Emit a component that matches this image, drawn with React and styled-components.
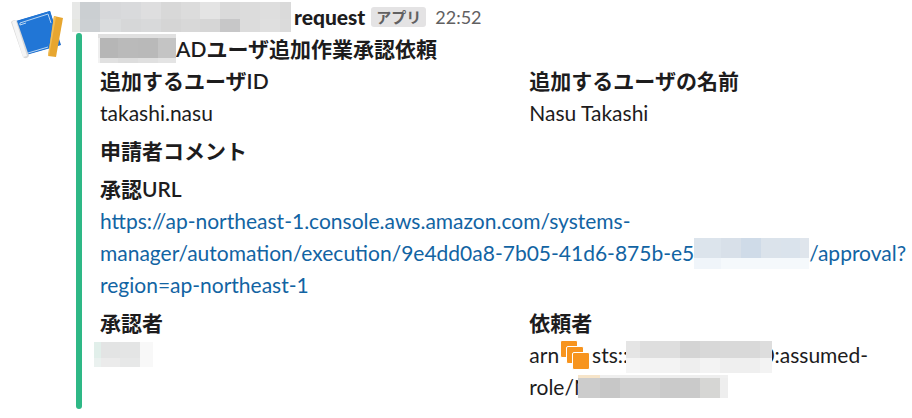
import React from "react";
import styled, { createGlobalStyle } from "styled-components";

const GlobalStyle = createGlobalStyle`
  * { box-sizing: border-box; }
  body {
    margin: 0;
    background: #fff;
    color: #1d1c1d;
    font-family: Lato, "Noto Sans CJK JP", sans-serif;
    font-size: 21px;
    line-height: 32px;
    overflow-x: hidden;
  }
`;

const Message = styled.article`
  display: grid;
  grid-template-columns: 76px minmax(0, 1fr);
`;

const Avatar = styled.div`
  padding: 8px 0 0 8px;
  svg { display: block; }
`;

const Header = styled.header`
  display: flex;
  align-items: center;
  height: 33px;
`;

const Sender = styled.span`
  display: flex;
  align-items: center;
  gap: 3px;
  margin-left: -4px;
  font-weight: 900;
`;

const AppBadge = styled.span`
  margin-left: 6px;
  padding: 0 5px;
  border-radius: 3px;
  background: #e4e3e4;
  color: #616061;
  font-size: 15px;
  font-weight: 700;
  line-height: 20px;
`;

const Time = styled.time`
  margin-left: 9px;
  color: #616061;
  font-size: 18px;
`;

const Attachment = styled.section`
  display: flex;
`;

const Bar = styled.div`
  flex: none;
  width: 6px;
  border-radius: 3px;
  background: #2eb886;
`;

const Body = styled.div`
  flex: 1;
  min-width: 0;
  padding: 0 2px 6px 18px;
`;

const Title = styled.h2`
  display: flex;
  margin: 0;
  font-size: inherit;
  font-weight: 600;
`;

const Fields = styled.div`
  display: grid;
  grid-template-columns: 53fr 47fr;
  row-gap: 6px;
`;

const Field = styled.div`
  grid-column: ${(p) => (p.$wide ? "1 / -1" : "auto")};
  min-width: 0;
`;

const Label = styled.h3`
  margin: 0;
  font-size: inherit;
  font-weight: 600;
`;

const Value = styled.p`
  margin: 0;
`;

const Link = styled.a`
  color: #1264a3;
  text-decoration: none;
`;

/* Each row of a mosaic is [height, [[width, colour], ...]]. */
const paint = (rows) => {
  let y = 0;
  return rows
    .map(([height, cells]) => {
      let x = 0;
      const stops = cells.map(([width, colour]) => {
        const stop = `${colour} ${x}px ${x + width}px`;
        x += width;
        return stop;
      });
      const layer = `linear-gradient(90deg, ${stops.join(", ")}) 0 ${y}px / ${x}px ${height}px no-repeat`;
      y += height;
      return layer;
    })
    .join(", ");
};

const Mosaic = styled.span`
  position: relative;
  display: inline-block;
  flex: none;
  vertical-align: ${(p) => p.$align || "middle"};
  width: ${(p) => p.$rows[0][1].reduce((sum, cell) => sum + cell[0], 0)}px;
  height: ${(p) => p.$rows.reduce((sum, row) => sum + row[0], 0)}px;
  margin: ${(p) => p.$margin || "0"};
  background: ${(p) => paint(p.$rows)};
`;

const StackIcon = styled.svg`
  display: inline-block;
  margin: -4px 2px -4px 1px;
  vertical-align: -3px;
`;

const senderMask = [
  [17, [[8, "#e7e8e7"], [20, "#cbcfd2"], [21, "#d7d8da"], [20, "#d9dadc"], [20, "#dededf"], [20, "#d8d8d8"], [19, "#dcdcdc"], [20, "#e4e4e4"], [20, "#dadada"], [20, "#dcdcdc"], [20, "#dedede"], [11, "#dadada"]]],
  [13, [[8, "#e6e7e2"], [20, "#ccd0d3"], [21, "#dadcdd"], [20, "#d6d7d8"], [20, "#d8d9da"], [20, "#d5d5d5"], [19, "#d8d8d8"], [20, "#d6d6d6"], [20, "#c7c7c8"], [20, "#dcdcdc"], [20, "#dfdfdf"], [11, "#dbdbdb"]]],
];
const titleMask = [
  [4, [[78, "#e0e0e0"]]],
  [20, [[2, "#eeeeee"], [18, "#b6b6b6"], [20, "#bababa"], [20, "#b9b9b9"], [18, "#c4c4c4"]]],
  [5, [[2, "#f2f2f2"], [18, "#e1e1e1"], [20, "#dddddd"], [20, "#e0e0e0"], [18, "#e4e4e4"]]],
];
const urlMask = [
  [20, [[27, "#dce4ec"], [20, "#d8e0e9"], [20, "#cfdbe8"], [20, "#dbe3eb"], [19, "#dae3ec"], [9, "#dfe5ec"]]],
  [11, [[27, "#f0f5fa"], [88, "#f5f9fc"]]],
];
const approverMask = [
  [16, [[7, "#e1efea"], [19, "#e3e4e4"], [20, "#e4e5e5"], [13, "#f8f8f8"]]],
  [9, [[7, "#eaf1ef"], [19, "#ebebeb"], [20, "#e7e8e8"], [13, "#f8f8f8"]]],
];
const accountMask = [
  [17, [[14, "#e5e5e5"], [40, "#dedede"], [20, "#d4d4d4"], [20, "#d8d8d8"], [40, "#d9d9d9"], [12, "#dddddd"]]],
  [15, [[14, "#f5f5f5"], [40, "#f3f3f3"], [20, "#eeeeee"], [20, "#f3f3f3"], [40, "#efefef"], [12, "#f3f3f3"]]],
];
const roleMask = [
  [3, [[22, "#f6e4c9"], [120, "#eeeeee"], [8, "#f0f0f0"]]],
  [20, [[22, "#cccccc"], [20, "#c7c7c7"], [40, "#cfcfcf"], [40, "#cacaca"], [20, "#d6d6d4"], [8, "#eeeeee"]]],
];

const BookIcon = () => (
  <svg width="58" height="56" viewBox="0 0 58 56" aria-hidden="true">
    <path d="M8 13 42 3 53 37 18 47Z" fill="#1767c8" />
    <path d="m9 13 33-10 10 34-32 9Z" fill="#2176d6" />
    <path d="M12 17v-2l28-9 3 9M20 45l20-6" fill="none" stroke="#b9d6f3" strokeWidth="1" />
    <path d="m12 17 6-2" fill="none" stroke="#b9d6f3" strokeWidth="1" />
    <path d="M3 14q2-3 6-1l12 35q-3 4-6 1Z" fill="#d9d9d9" />
    <path d="M4 14q2-2 4-1l11 35-4 1Z" fill="#f5f5f5" />
    <path d="m46 8 9 2-7 39-8-1Z" fill="#e7a630" />
    <path d="m46 8 2 1-7 39-1 0Z" fill="#f1bd58" />
  </svg>
);

const Layers = () => (
  <StackIcon width="30" height="30" viewBox="0 0 30 30" aria-hidden="true">
    <g fill="#f7941e" stroke="#fff" strokeWidth="1">
      <rect x="0.5" y="0.5" width="17" height="17" rx="1.5" />
      <rect x="6.5" y="6.5" width="17" height="17" rx="1.5" />
      <rect x="12.5" y="12.5" width="17" height="17" rx="1.5" />
    </g>
  </StackIcon>
);

export default function App() {
  return (
    <>
      <GlobalStyle />
      <Message>
        <Avatar><BookIcon /></Avatar>
        <div>
          <Header>
            <Sender><Mosaic $rows={senderMask} />request</Sender>
            <AppBadge>アプリ</AppBadge>
            <Time>22:52</Time>
          </Header>
          <Attachment>
            <Bar />
            <Body>
              <Title><Mosaic $rows={titleMask} $margin="1px 0 0 -2px" />ADユーザ追加作業承認依頼</Title>
              <Fields>
                <Field>
                  <Label>追加するユーザID</Label>
                  <Value>takashi.nasu</Value>
                </Field>
                <Field>
                  <Label>追加するユーザの名前</Label>
                  <Value>Nasu Takashi</Value>
                </Field>
                <Field $wide>
                  <Label>申請者コメント</Label>
                </Field>
                <Field $wide>
                  <Label>承認URL</Label>
                  <Link href="https://ap-northeast-1.console.aws.amazon.com/systems-manager/automation">
                    https://ap-northeast-1.console.aws.amazon.com/systems-<wbr />
                    manager/automation/execution/9e4dd0a8-7b05-41d6-875b-e5
                    <Mosaic $rows={urlMask} $align="-4px" $margin="-4px 0" />/approval?<wbr />
                    region=ap-northeast-1
                  </Link>
                </Field>
                <Field>
                  <Label>承認者</Label>
                  <Value><Mosaic $rows={approverMask} $align="-4px" $margin="0 0 0 -6px" /></Value>
                </Field>
                <Field>
                  <Label>依頼者</Label>
                  <Value>
                    arn<Layers />sts::<Mosaic $rows={accountMask} $align="-6px" $margin="-4px -10px -4px -2px" />0:assumed-<wbr />
                    role/N<Mosaic $rows={roleMask} $align="-3px" $margin="0 0 0 -12px" />
                  </Value>
                </Field>
              </Fields>
            </Body>
          </Attachment>
        </div>
      </Message>
    </>
  );
}
